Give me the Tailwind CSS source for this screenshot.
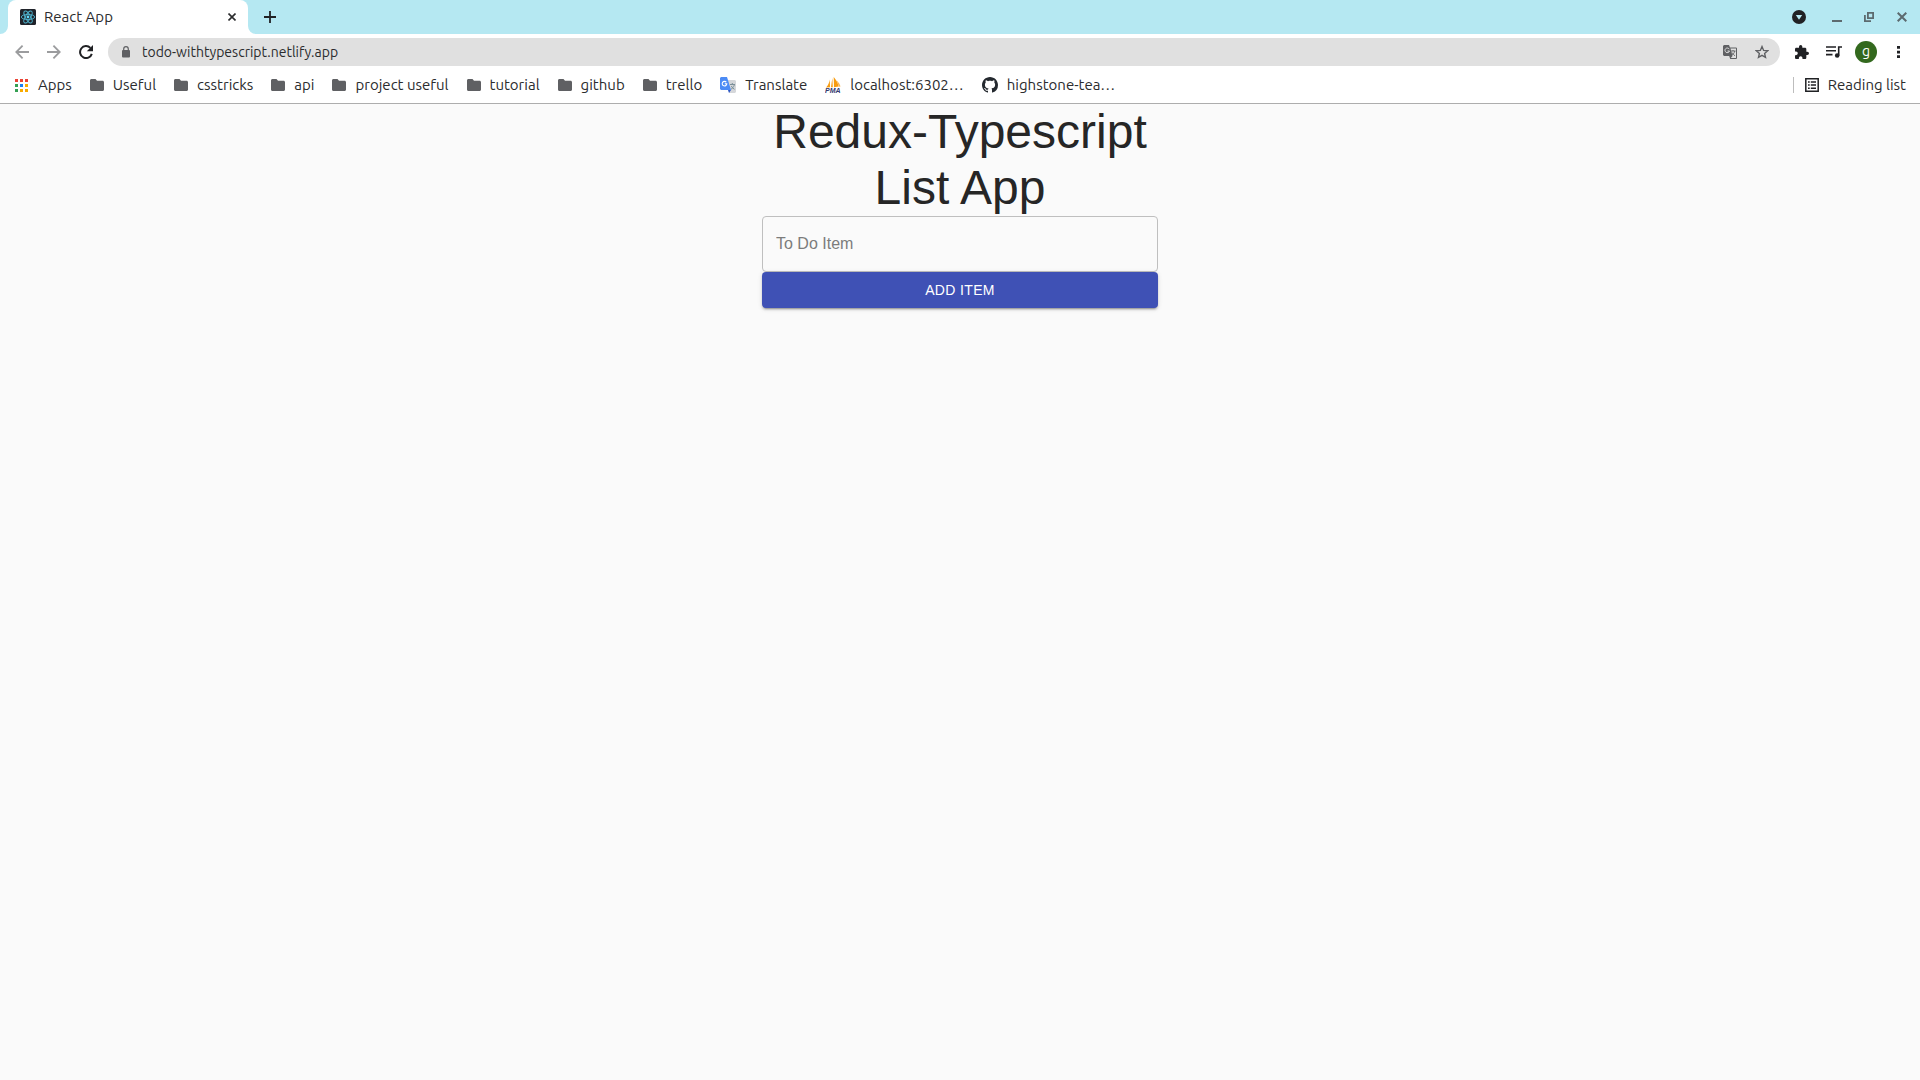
<!DOCTYPE html>
<html lang="en">
<head>
<meta charset="utf-8">
<meta name="viewport" content="width=device-width, initial-scale=1">
<title>React App</title>
<script src="https://cdn.jsdelivr.net/npm/@tailwindcss/browser@4"></script>
</head>
<body class="flex min-h-screen flex-col bg-[#fafafa] font-['Ubuntu','Noto_Sans',sans-serif] text-[15px] leading-[22px] text-[#2b2c2e]">

<svg class="hidden" aria-hidden="true">
  <symbol id="folder" viewBox="0 0 14 12"><path fill="#5f6063" d="M1.500 0h4L7 1.700h5.500C13.400 1.700 14 2.300 14 3.200v7.300c0 .9-.6 1.500-1.500 1.500h-11C.6 12 0 11.400 0 10.500v-9C0 .6.6 0 1.500 0z"/></symbol>
</svg>

<header class="bg-white">
  <!-- Tab strip -->
  <div class="flex h-[34px] items-center bg-[#b5e8f2] pr-[13px]">
    <svg class="h-[34px] w-2 shrink-0" viewBox="0 0 8 34"><path fill="#fff" d="M8 26v8H0a8 8 0 0 0 8-8z"/></svg>
    <div class="flex h-[34px] w-60 items-center rounded-t-lg bg-white pr-2 pl-3">
      <svg class="size-4 shrink-0" viewBox="0 0 16 16"><rect width="16" height="16" rx="1.500" fill="#20232a"/><g fill="none" stroke="#4fb4cf" stroke-width=".9"><ellipse cx="8" cy="8" rx="6.700" ry="2.600"/><ellipse cx="8" cy="8" rx="6.700" ry="2.600" transform="rotate(60 8 8)"/><ellipse cx="8" cy="8" rx="6.700" ry="2.600" transform="rotate(120 8 8)"/></g><circle cx="8" cy="8" r="1.400" fill="#61dafb"/></svg>
      <span class="ml-2 grow whitespace-nowrap">React App</span>
      <button aria-label="Close tab" class="flex size-4 items-center justify-center"><svg class="size-2" viewBox="0 0 8 8"><path d="M.5.5l7 7M7.500.5l-7 7" stroke="#2b2c2e" stroke-width="1.600"/></svg></button>
    </div>
    <svg class="h-[34px] w-2 shrink-0" viewBox="0 0 8 34"><path fill="#fff" d="M0 26v8h8a8 8 0 0 1-8-8z"/></svg>
    <button aria-label="New tab" class="ml-2 size-3"><svg class="size-3" viewBox="0 0 12 12"><path d="M6 0v12M0 6h12" stroke="#202124" stroke-width="1.800"/></svg></button>
    <div class="ml-auto flex items-center text-[#5c6a6f]">
      <button aria-label="Search tabs" class="size-3.5"><svg class="size-3.5" viewBox="0 0 14 14"><circle cx="7" cy="7" r="7" fill="#202124"/><path fill="#b5e8f2" d="M3.800 5h6.400L7 9.700z"/></svg></button>
      <button aria-label="Minimize" class="ml-[26px] h-3 w-2.5"><svg class="h-3 w-2.5" viewBox="0 0 10 12"><path fill="currentColor" d="M0 9h10v2H0z"/></svg></button>
      <button aria-label="Restore" class="ml-[22px] size-2.5"><svg class="size-2.5" viewBox="0 0 10 10"><path fill="none" stroke="currentColor" stroke-width="1.800" d="M3.900.9h5.200v5.200H3.900z"/><path fill="currentColor" d="M0 3h1.800v5.200H7V10H0z"/></svg></button>
      <button aria-label="Close window" class="ml-[23px] size-2.5"><svg class="size-2.5" viewBox="0 0 10 10"><path d="M.7.7l8.600 8.600M9.300.7L.7 9.300" stroke="currentColor" stroke-width="2"/></svg></button>
    </div>
  </div>

  <!-- Navigation toolbar -->
  <div class="flex h-9 items-center pr-5 pl-[15px]">
    <button aria-label="Back" class="size-3.5"><svg class="size-3.5" viewBox="0 0 14 14"><path fill="none" stroke="#9b9c9e" stroke-width="1.800" d="M14 7H1.500M7.600.7L1.300 7l6.300 6.300"/></svg></button>
    <button aria-label="Forward" class="ml-[18px] size-3.5"><svg class="size-3.5" viewBox="0 0 14 14"><path fill="none" stroke="#9b9c9e" stroke-width="1.800" d="M0 7h12.500M6.400.7L12.700 7l-6.300 6.300"/></svg></button>
    <button aria-label="Reload" class="ml-[18px] size-3.5"><svg class="size-3.5" viewBox="0 0 14 14"><path fill="none" stroke="#202124" stroke-width="2" d="M12.800 8.900A6 6 0 1 1 11.400 2.900"/><path fill="#202124" d="M14 0v6.200H7.800z"/></svg></button>
    <div class="ml-[15px] flex h-7 grow items-center rounded-full bg-[#e0e0e0] pr-[11px] pl-3.5">
      <svg class="h-3 w-2 shrink-0" viewBox="0 0 8 12"><rect y="4" width="8" height="7.500" rx="1" fill="#5f6063"/><path fill="none" stroke="#5f6063" stroke-width="1.200" d="M1.700 4.500V3a2.300 2.300 0 0 1 4.600 0v1.500"/></svg>
      <input aria-label="Address" value="todo-withtypescript.netlify.app" class="ml-3 min-w-0 grow bg-transparent text-sm text-[#2b2c2e] outline-none">
      <button aria-label="Translate this page" class="size-3.5"><svg class="size-3.5" viewBox="0 0 14 14"><path fill="#5f6063" d="M1 0h5l1 2.500h6.300l.7.700v10.100l-.7.700H7.200L6.200 11H1L0 10V1z"/><path fill="#e0e0e0" d="M7.500 3.500H13V13H7.800l1.700-2z"/><path fill="none" stroke="#e0e0e0" d="M6.300 4.200A2.300 2.300 0 1 0 6.500 6H4.500"/><path fill="none" stroke="#5f6063" stroke-width=".9" d="M8 6h4.500M10 5v1M11.800 6c-.5 2-1.800 3.500-3 4M9 7.500c.8 1.500 2 2.500 3 3.300"/></svg></button>
      <button aria-label="Bookmark this tab" class="ml-[18px] size-3.5"><svg class="size-3.5" viewBox="0 0 14 14"><path fill="none" stroke="#5f6063" stroke-width="1.400" d="M7 1.600l1.600 3.800 4.100.3-3.100 2.700.9 4L7 10.300l-3.500 2.100.9-4L1.300 5.700l4.100-.3z"/></svg></button>
    </div>
    <button aria-label="Extensions" class="ml-[15px] size-3.5"><svg class="size-3.5" viewBox="2 1 21 21"><path fill="#202124" d="M20.500 11H19V7c0-1.100-.9-2-2-2h-4V3.500a2.500 2.500 0 0 0-5 0V5H4c-1.100 0-2 .9-2 2v3.800h1.500a2.700 2.700 0 0 1 0 5.400H2V20c0 1.100.9 2 2 2h3.800v-1.500a2.700 2.700 0 0 1 5.400 0V22H17c1.100 0 2-.9 2-2v-4h1.500a2.500 2.500 0 0 0 0-5z"/></svg></button>
    <button aria-label="Media controls" class="ml-[17px] h-3 w-4"><svg class="h-3 w-4" viewBox="0 0 16 12"><path fill="none" stroke="#202124" stroke-width="1.600" d="M0 1h10M0 4.800h10M0 8.600h6.500M12.700 9.500V1H16"/><circle cx="11.200" cy="9.500" r="2.300" fill="#202124"/></svg></button>
    <button aria-label="Profile" class="ml-[13px] flex size-[22px] items-center justify-center rounded-full bg-[#33691e] pb-0.5 text-sm text-white">g</button>
    <button aria-label="Menu" class="ml-5 h-3 w-[3px]"><svg class="h-3 w-[3px]" viewBox="0 0 3 12"><path fill="#202124" d="M0 0h3v2.700H0zM0 4.700h3v2.700H0zM0 9.300h3V12H0z"/></svg></button>
  </div>

  <!-- Bookmarks bar -->
  <nav class="flex h-[34px] items-center gap-[18px] border-b border-[#adadad] pr-3.5 pb-[3px] pl-[15px] whitespace-nowrap">
    <a href="#" class="flex items-center gap-2.5"><svg class="size-[13px] shrink-0" viewBox="0 0 13 13"><path fill="#ea4335" d="M0 0h3v3H0zM5 0h3v3H5zM10 0h3v3h-3z"/><path fill="#34a053" d="M0 5h3v3H0zM0 10h3v3H0z"/><path fill="#1a80f5" d="M5 5h3v3H5z"/><path fill="#f9ab00" d="M10 5h3v3h-3zM5 10h3v3H5zM10 10h3v3h-3z"/></svg>Apps</a>
    <a href="#" class="flex items-center gap-[9px]"><svg class="h-3 w-3.5 shrink-0"><use href="#folder"/></svg>Useful</a>
    <a href="#" class="flex items-center gap-[9px]"><svg class="h-3 w-3.5 shrink-0"><use href="#folder"/></svg>csstricks</a>
    <a href="#" class="flex items-center gap-[9px]"><svg class="h-3 w-3.5 shrink-0"><use href="#folder"/></svg>api</a>
    <a href="#" class="flex items-center gap-[9px]"><svg class="h-3 w-3.5 shrink-0"><use href="#folder"/></svg>project useful</a>
    <a href="#" class="flex items-center gap-[9px]"><svg class="h-3 w-3.5 shrink-0"><use href="#folder"/></svg>tutorial</a>
    <a href="#" class="flex items-center gap-[9px]"><svg class="h-3 w-3.5 shrink-0"><use href="#folder"/></svg>github</a>
    <a href="#" class="flex items-center gap-[9px]"><svg class="h-3 w-3.5 shrink-0"><use href="#folder"/></svg>trello</a>
    <a href="#" class="flex items-center gap-[9px]"><svg class="size-4 shrink-0" viewBox="0 0 16 16"><path fill="#d5d7da" d="M7 3h8l1 1v11l-1 1H9z"/><path fill="none" stroke="#7c9099" d="M10 7.500h5M12.300 6v1.500M14.300 8c-.5 2-2 3.500-3.300 4.200M11.300 9c.7 1.500 2 2.700 3.200 3.300"/><path fill="#4c8bf5" d="M1 0h6l4 13H1l-1-1V1z"/><path fill="#2a56c6" d="M8 13h3L9 16z"/><path fill="none" stroke="#fff" stroke-width="1.100" d="M6.300 5.200A2.300 2.300 0 1 0 6.800 6.700H4.800"/></svg>Translate</a>
    <a href="#" class="flex items-center gap-[9px]"><svg class="size-4 shrink-0" viewBox="0 0 16 16"><path fill="#f89c0e" d="M8.700 0c2.500 2.800 4.300 6 5 9.600L9 10.200zM4.800 2.500L5 10.200 1 10.600C3 8.500 4.300 5.800 4.800 2.500zM7.300 1l.5 9.200H6z"/><path fill="#fbb450" d="M11.500 3.500c2 1.500 3.300 3.500 4 6l-1.500.2z"/><text x="0" y="15.500" font-family="Liberation Sans" font-size="7" font-weight="bold" font-style="italic" fill="#34386e">PMA</text></svg>localhost:6302…</a>
    <a href="#" class="flex items-center gap-[9px]"><svg class="size-4 shrink-0" viewBox="0 0 16 16"><path fill="#24292f" d="M8 0C3.580 0 0 3.580 0 8c0 3.540 2.290 6.530 5.470 7.590.4.070.55-.17.55-.38 0-.19-.01-.82-.01-1.490-2.010.37-2.530-.49-2.690-.94-.09-.23-.48-.94-.82-1.130-.28-.15-.68-.52-.01-.53.63-.01 1.080.58 1.230.82.72 1.210 1.870.87 2.330.66.07-.52.28-.87.51-1.070-1.780-.2-3.640-.89-3.640-3.950 0-.87.31-1.590.82-2.150-.08-.2-.36-1.020.08-2.120 0 0 .67-.21 2.200.82.64-.18 1.320-.27 2-.27s1.360.09 2 .27c1.530-1.040 2.200-.82 2.200-.82.44 1.100.16 1.920.08 2.120.51.56.82 1.270.82 2.150 0 3.070-1.870 3.750-3.650 3.950.29.25.54.73.54 1.480 0 1.070-.01 1.930-.01 2.200 0 .21.15.46.55.38A8.010 8.010 0 0 0 16 8c0-4.420-3.580-8-8-8z"/></svg>highstone-tea…</a>
    <a href="#" class="ml-auto flex items-center"><span class="mr-[11px] h-4 w-px bg-[#bdbdbd]"></span><svg class="mr-[9px] size-3.5 shrink-0" viewBox="0 0 14 14"><path fill="none" stroke="#202124" stroke-width="1.500" d="M.8.8h12.400v12.400H.8z"/><path fill="#202124" d="M3 3.200h1.700v1.500H3zM3 6.300h1.700v1.500H3zM3 9.400h1.700v1.500H3zM5.800 3.200H11v1.500H5.800zM5.800 6.300H11v1.500H5.800zM5.800 9.400H11v1.500H5.800z"/></svg>Reading list</a>
  </nav>
</header>

<!-- Page -->
<main class="mx-auto w-full max-w-[444px] px-6 font-['Liberation_Sans',sans-serif]">
  <h1 class="text-center text-5xl leading-[56px] text-[#262626]">Redux-Typescript List App</h1>
  <form class="flex flex-col">
    <input type="text" aria-label="To Do Item" placeholder="To Do Item" class="h-14 rounded border border-[#bfbfbf] bg-transparent px-[13px] text-base text-[#262626] outline-none placeholder:text-[#7c7c7c]">
    <button type="button" class="h-9 rounded bg-[#3f51b5] text-sm tracking-wide text-white uppercase shadow-[0_3px_1px_-2px_rgba(0,0,0,0.2),0_2px_2px_0_rgba(0,0,0,0.14),0_1px_5px_0_rgba(0,0,0,0.12)]">Add Item</button>
  </form>
</main>
</body>
</html>
